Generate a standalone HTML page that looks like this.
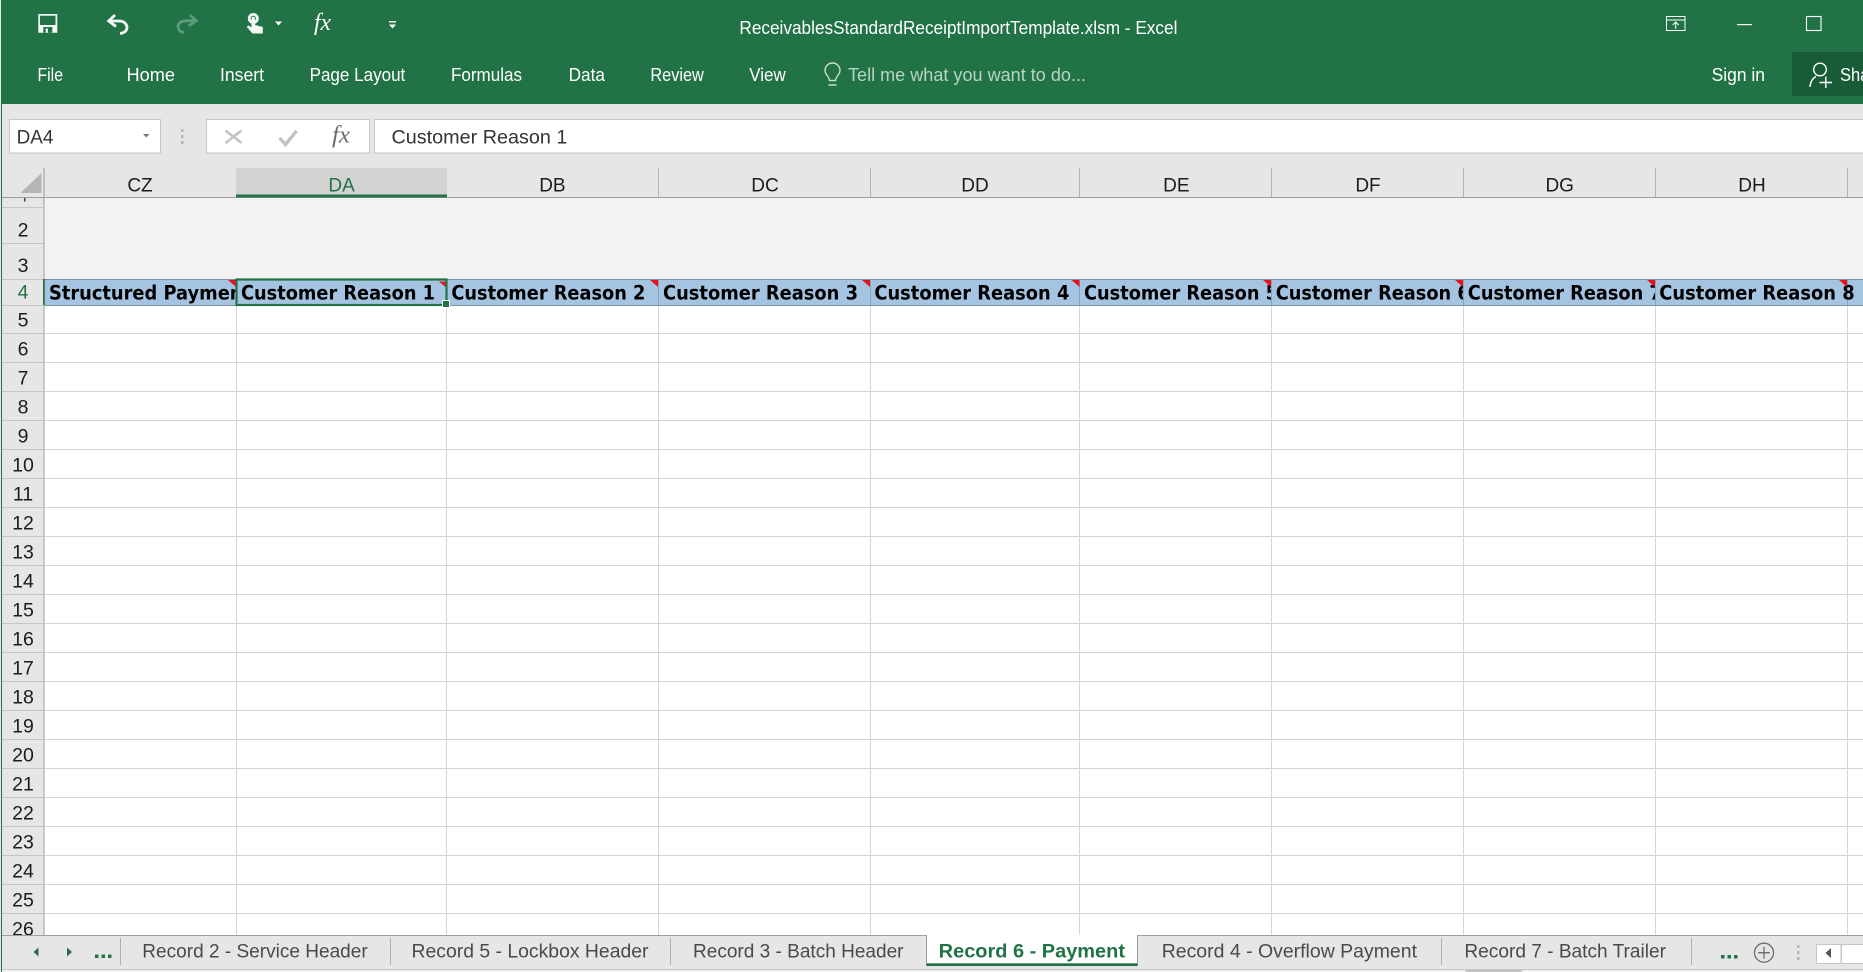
<!DOCTYPE html>
<html lang="en"><head><meta charset="utf-8"><title>ReceivablesStandardReceiptImportTemplate.xlsm - Excel</title>
<style>
html,body{margin:0;padding:0;width:1863px;height:972px;overflow:hidden;background:#e6e6e6}
svg{display:block}
text{font-family:"Liberation Sans",sans-serif}
.w{fill:#fff;font-size:18.5px}
.c{fill:#1c1c1c;font-size:19px;text-anchor:middle}
.r{fill:#1c1c1c;font-size:19.5px;text-anchor:middle}
.b{fill:#000;font-family:"DejaVu Sans",sans-serif;font-weight:700;font-size:19.5px}
.t{fill:#4a4a4a;font-size:19.5px}
</style></head><body>
<svg width="1863" height="972" viewBox="0 0 1863 972" xmlns="http://www.w3.org/2000/svg">
<defs>
<clipPath id="c0"><rect x="44" y="280" width="191.5" height="25"/></clipPath>
<clipPath id="c5"><rect x="1079" y="280" width="192" height="25"/></clipPath>
<clipPath id="c6"><rect x="1271" y="280" width="192" height="25"/></clipPath>
<clipPath id="c7"><rect x="1463" y="280" width="192" height="25"/></clipPath>
</defs>
<!-- page bg -->
<rect width="1863" height="972" fill="#e6e6e6"/>
<!-- title/ribbon -->
<rect x="0" y="0" width="1863" height="104" fill="#217346"/>
<rect x="1792" y="52" width="71" height="44" fill="#185c37"/>
<!-- QAT: save -->
<path d="M38.300 14H57.300V32.700H38.300Z" fill="#f4f8f5"/>
<rect x="40" y="15.700" width="15.500" height="9.300" fill="#217346"/>
<rect x="43.300" y="27" width="9" height="5.700" fill="#217346"/>
<rect x="45.700" y="28.500" width="2.200" height="4.200" fill="#f4f8f5"/>
<!-- undo -->
<path d="M115 15L108.700 21L116 26.500M109 21H119C124.500 21 127 24.500 127 27.500C127 31 124 33 120 33.500" fill="none" stroke="#f4f8f5" stroke-width="2.800"/>
<!-- redo -->
<path d="M190 15L196.300 20.800L188.500 26M196 20.800H185.500C180.500 20.800 178 24 178 26.800C178 30 180.500 32 184 32.500" fill="none" stroke="#5c9c7b" stroke-width="2.800"/>
<!-- touch -->
<circle cx="253.300" cy="18.500" r="5.500" fill="#f4f8f5"/>
<circle cx="253.300" cy="18.500" r="2.700" fill="#217346"/>
<path d="M251.500 18.500a1.800 1.800 0 0 1 3.600 0V25l7.700 2V33.500H252.500L246.800 27l1.500-1.500 3.200 1.700Z" fill="#f4f8f5"/>
<path d="M275 21.500h7l-3.500 4z" fill="#fff"/>
<text x="314" y="30" style="font-family:'Liberation Serif',serif;font-style:italic;font-size:24px" fill="#fff" textLength="17" lengthAdjust="spacingAndGlyphs">fx</text>
<rect x="389" y="21" width="7" height="1.500" fill="#fff"/><path d="M389 24.500h7l-3.500 4z" fill="#fff"/>
<!-- title -->
<text class="w" x="739.400" y="34" textLength="438" lengthAdjust="spacingAndGlyphs">ReceivablesStandardReceiptImportTemplate.xlsm - Excel</text>
<!-- ribbon tabs -->
<text class="w" x="37.500" y="81" textLength="25.500" lengthAdjust="spacingAndGlyphs">File</text>
<text class="w" x="126.500" y="81" textLength="48.500" lengthAdjust="spacingAndGlyphs">Home</text>
<text class="w" x="220" y="81" textLength="44" lengthAdjust="spacingAndGlyphs">Insert</text>
<text class="w" x="309.600" y="81" textLength="95.700" lengthAdjust="spacingAndGlyphs">Page Layout</text>
<text class="w" x="451" y="81" textLength="71" lengthAdjust="spacingAndGlyphs">Formulas</text>
<text class="w" x="568.600" y="81" textLength="36.400" lengthAdjust="spacingAndGlyphs">Data</text>
<text class="w" x="650.400" y="81" textLength="53.400" lengthAdjust="spacingAndGlyphs">Review</text>
<text class="w" x="749.300" y="81" textLength="36.400" lengthAdjust="spacingAndGlyphs">View</text>
<path d="M829.500 80.500C829 76 825 74.500 825 70.500A7.500 7.500 0 0 1 840 70.500C840 74.500 836 76 835.500 80.500ZM828.500 85H836.500" fill="none" stroke="#c8dfd2" stroke-width="1.400"/>
<text x="848" y="81" font-size="18.500" fill="#b7d4c4" textLength="238" lengthAdjust="spacingAndGlyphs">Tell me what you want to do...</text>
<!-- window controls -->
<path d="M1666.500 16.500H1685V30.500H1666.500ZM1666.500 20H1685M1675.700 29V22M1672.700 25L1675.700 22L1678.700 25" fill="none" stroke="#fff" stroke-width="1"/>
<rect x="1737" y="24" width="15" height="1.200" fill="#fff"/>
<rect x="1806.500" y="16.500" width="14.500" height="14" fill="none" stroke="#fff" stroke-width="1.100"/>
<text class="w" x="1711.600" y="81" textLength="53.400" lengthAdjust="spacingAndGlyphs">Sign in</text>
<circle cx="1820" cy="69.500" r="6.300" fill="none" stroke="#fff" stroke-width="1.400"/>
<path d="M1810 87C1810.500 81 1813 78 1816 76.500M1819.500 82.500H1832M1825.800 76.500V88" fill="none" stroke="#fff" stroke-width="1.400"/>
<text class="w" x="1840" y="81" textLength="44" lengthAdjust="spacingAndGlyphs">Share</text>
<!-- formula bar -->
<rect x="0" y="104" width="1863" height="64" fill="#e6e6e6"/>
<rect x="9.500" y="119.500" width="151" height="33.500" fill="#fff" stroke="#c6c6c6"/>
<text x="16.600" y="143.500" font-size="19.500" fill="#333" textLength="36.800" lengthAdjust="spacingAndGlyphs">DA4</text>
<path d="M143 134h6.500l-3.250 3.500z" fill="#777"/>
<rect x="181" y="129" width="2.500" height="3" fill="#b5b5b5"/><rect x="181" y="135" width="2.500" height="3" fill="#b5b5b5"/><rect x="181" y="141" width="2.500" height="3" fill="#b5b5b5"/>
<rect x="206.500" y="119.500" width="163" height="33.500" fill="#fff" stroke="#c6c6c6"/>
<path d="M225.500 130.500L241.500 143M241.500 130.500L225.500 143" stroke="#c2c2c2" stroke-width="2.400" fill="none"/>
<path d="M279.500 138L285.500 144.500L296.500 131" stroke="#c2c2c2" stroke-width="3.400" fill="none"/>
<text x="332" y="142.500" style="font-family:'Liberation Serif',serif;font-style:italic;font-size:24px" fill="#6a6a6a" textLength="18" lengthAdjust="spacingAndGlyphs">fx</text>
<rect x="374.500" y="119.500" width="1490" height="33.500" fill="#fff" stroke="#c6c6c6"/>
<text x="391.500" y="143.500" font-size="19.500" fill="#333" textLength="175.900" lengthAdjust="spacingAndGlyphs">Customer Reason 1</text>
<!-- sheet -->
<rect x="44" y="197" width="1819" height="738" fill="#fff"/>
<rect x="44" y="197" width="1819" height="82" fill="#f2f2f2"/>
<!-- grid -->
<path d="M44 333.500H1863M44 362.500H1863M44 391.500H1863M44 420.500H1863M44 449.500H1863M44 478.500H1863M44 507.500H1863M44 536.500H1863M44 565.500H1863M44 594.500H1863M44 623.500H1863M44 652.500H1863M44 681.500H1863M44 710.500H1863M44 739.500H1863M44 768.500H1863M44 797.500H1863M44 826.500H1863M44 855.500H1863M44 884.500H1863M44 913.500H1863" stroke="#d4d4d4" stroke-width="1" fill="none"/>
<path d="M236.500 305V935M446.500 305V935M658.500 305V935M870.500 305V935M1079.500 305V935M1271.500 305V935M1463.500 305V935M1655.500 305V935M1847.500 305V935" stroke="#d4d4d4" stroke-width="1" fill="none"/>
<!-- row 4 -->
<rect x="44" y="279" width="1819" height="26" fill="#a5c4e2"/>
<path d="M44 279.500H1863M44 305.500H1863" stroke="#7e90a5" stroke-width="1" fill="none"/>
<path d="M236.500 279V305M446.500 279V305M658.500 279V305M870.500 279V305M1079.500 279V305M1271.500 279V305M1463.500 279V305M1655.500 279V305M1847.500 279V305" stroke="#8ba2bb" stroke-width="1" fill="none"/>
<text class="b" x="49" y="299.300" textLength="202" lengthAdjust="spacingAndGlyphs" clip-path="url(#c0)">Structured Payment</text>
<text class="b" x="241" y="299.300" textLength="194" lengthAdjust="spacingAndGlyphs">Customer Reason 1</text>
<text class="b" x="451.400" y="299.300" textLength="194" lengthAdjust="spacingAndGlyphs">Customer Reason 2</text>
<text class="b" x="663" y="299.300" textLength="195" lengthAdjust="spacingAndGlyphs">Customer Reason 3</text>
<text class="b" x="874.400" y="299.300" textLength="195" lengthAdjust="spacingAndGlyphs">Customer Reason 4</text>
<text class="b" x="1084" y="299.300" textLength="194" lengthAdjust="spacingAndGlyphs" clip-path="url(#c5)">Customer Reason 5</text>
<text class="b" x="1275.700" y="299.300" textLength="194" lengthAdjust="spacingAndGlyphs" clip-path="url(#c6)">Customer Reason 6</text>
<text class="b" x="1467.800" y="299.300" textLength="194" lengthAdjust="spacingAndGlyphs" clip-path="url(#c7)">Customer Reason 7</text>
<text class="b" x="1659.300" y="299.300" textLength="195.400" lengthAdjust="spacingAndGlyphs">Customer Reason 8</text>
<!-- comment triangles -->
<path d="M228 280H236V287ZM439 281.500H445.500V287ZM650 280H658V287ZM862 280H870V287ZM1071.500 280H1079.500V287ZM1263 280H1271V287ZM1455 280H1463V287ZM1647 280H1655V287ZM1839 280H1847V287Z" fill="#e8111b"/>
<!-- col header -->
<rect x="44" y="168" width="1819" height="29" fill="#e6e6e6"/>
<rect x="236" y="168" width="211" height="29" fill="#d2d2d2"/>
<path d="M658.500 168V197M870.500 168V197M1079.500 168V197M1271.500 168V197M1463.500 168V197M1655.500 168V197M1847.500 168V197" stroke="#b5b5b5" stroke-width="1" fill="none"/>
<rect x="0" y="197" width="1863" height="1" fill="#9f9f9f"/>
<rect x="236" y="194.500" width="211" height="3" fill="#217346"/>
<text class="c" x="140" y="191.600">CZ</text>
<text class="c" x="341.600" y="191.600" style="fill:#217346">DA</text>
<text class="c" x="552.400" y="191.600">DB</text>
<text class="c" x="765" y="191.600">DC</text>
<text class="c" x="975" y="191.600">DD</text>
<text class="c" x="1176.300" y="191.600">DE</text>
<text class="c" x="1368" y="191.600">DF</text>
<text class="c" x="1559.700" y="191.600">DG</text>
<text class="c" x="1752" y="191.600">DH</text>
<!-- row header -->
<rect x="0" y="168" width="44" height="767" fill="#e6e6e6"/>
<path d="M41.500 173V193H20.500Z" fill="#b5b5b5"/>
<rect x="0" y="197" width="44" height="1" fill="#9f9f9f"/>
<rect x="43.500" y="168" width="1" height="767" fill="#9f9f9f"/>
<path d="M0 207.500H44M0 243.500H44M0 279.500H44M0 305.500H44M0 333.500H44M0 362.500H44M0 391.500H44M0 420.500H44M0 449.500H44M0 478.500H44M0 507.500H44M0 536.500H44M0 565.500H44M0 594.500H44M0 623.500H44M0 652.500H44M0 681.500H44M0 710.500H44M0 739.500H44M0 768.500H44M0 797.500H44M0 826.500H44M0 855.500H44M0 884.500H44M0 913.500H44" stroke="#c6c6c6" stroke-width="1" fill="none"/>
<rect x="24" y="198" width="1.500" height="3.500" fill="#444"/>
<rect x="43" y="279" width="1.800" height="26" fill="#217346"/>
<text class="r" x="23" y="236.700">2</text>
<text class="r" x="23" y="272">3</text>
<text class="r" x="23" y="298.700" style="fill:#217346">4</text>
<text class="r" x="23" y="326.700">5</text>
<text class="r" x="23" y="355.700">6</text>
<text class="r" x="23" y="384.700">7</text>
<text class="r" x="23" y="413.700">8</text>
<text class="r" x="23" y="442.700">9</text>
<text class="r" x="23" y="471.700">10</text>
<text class="r" x="23" y="500.700">11</text>
<text class="r" x="23" y="529.700">12</text>
<text class="r" x="23" y="558.700">13</text>
<text class="r" x="23" y="587.700">14</text>
<text class="r" x="23" y="616.700">15</text>
<text class="r" x="23" y="645.700">16</text>
<text class="r" x="23" y="674.700">17</text>
<text class="r" x="23" y="703.700">18</text>
<text class="r" x="23" y="732.700">19</text>
<text class="r" x="23" y="761.700">20</text>
<text class="r" x="23" y="790.700">21</text>
<text class="r" x="23" y="819.700">22</text>
<text class="r" x="23" y="848.700">23</text>
<text class="r" x="23" y="877.700">24</text>
<text class="r" x="23" y="906.700">25</text>
<text class="r" x="23" y="935.700">26</text>
<!-- selection -->
<rect x="236.500" y="279.500" width="210" height="25.500" fill="none" stroke="#217346" stroke-width="2.200"/>
<rect x="442.500" y="300.500" width="7" height="7" fill="#217346" stroke="#fff" stroke-width="1"/>
<!-- tab bar -->
<rect x="0" y="935" width="1863" height="34" fill="#e6e6e6"/>
<rect x="0" y="935" width="1863" height="1" fill="#9f9f9f"/>
<rect x="0" y="969" width="1863" height="1" fill="#c6c6c6"/>
<rect x="0" y="970" width="1863" height="2" fill="#f0f0f0"/>
<rect x="1465.600" y="969" width="56.200" height="3" fill="#c4c4c4"/>
<path d="M38.500 947.500V956.500L33.500 952ZM67 947.500V956.500L72 952Z" fill="#217346"/>
<path d="M95 954.500h3.500v3.500h-3.500zM101.500 954.500h3.500v3.500h-3.500zM108 954.500h3.500v3.500h-3.500zM1721 955h3.500v3.500h-3.500zM1727.500 955h3.500v3.500h-3.500zM1734 955h3.500v3.500h-3.500z" fill="#217346"/>
<path d="M120.500 938V965M390.500 938V965M670.500 938V965M1441.500 938V965M1691.500 938V965" stroke="#b0b0b0" stroke-width="1" fill="none"/>
<rect x="926.500" y="935" width="211" height="31" fill="#fff"/>
<path d="M926.500 935V966M1137.500 935V966" stroke="#9f9f9f" stroke-width="1" fill="none"/>
<rect x="926.500" y="963.300" width="211" height="2.700" fill="#217346"/>
<text class="t" x="142.300" y="957.300" textLength="225.400" lengthAdjust="spacingAndGlyphs">Record 2 - Service Header</text>
<text class="t" x="411.500" y="957.300" textLength="237" lengthAdjust="spacingAndGlyphs">Record 5 - Lockbox Header</text>
<text class="t" x="693" y="957.300" textLength="210.500" lengthAdjust="spacingAndGlyphs">Record 3 - Batch Header</text>
<text x="938.700" y="957.300" font-size="19.500" font-weight="700" fill="#217346" textLength="186.300" lengthAdjust="spacingAndGlyphs">Record 6 - Payment</text>
<text class="t" x="1161.700" y="957.300" textLength="255.300" lengthAdjust="spacingAndGlyphs">Record 4 - Overflow Payment</text>
<text class="t" x="1464.400" y="957.300" textLength="201.600" lengthAdjust="spacingAndGlyphs">Record 7 - Batch Trailer</text>
<circle cx="1764" cy="952.700" r="9.500" fill="none" stroke="#6e6e6e" stroke-width="1.300"/>
<path d="M1758 952.700H1770M1764 946.700V958.700" stroke="#6e6e6e" stroke-width="1.300" fill="none"/>
<rect x="1797" y="945" width="2.500" height="3" fill="#b5b5b5"/><rect x="1797" y="951" width="2.500" height="3" fill="#b5b5b5"/><rect x="1797" y="957" width="2.500" height="3" fill="#b5b5b5"/>
<rect x="1816.500" y="944.500" width="24.500" height="19" fill="#fff" stroke="#c6c6c6"/>
<rect x="1841.500" y="944.500" width="30" height="19" fill="#fff" stroke="#c6c6c6"/>
<path d="M1831 948V958L1825.500 953Z" fill="#555"/>
<!-- left edge -->
<rect x="0" y="0" width="1" height="972" fill="#e8e8e8"/>
<rect x="1" y="0" width="1" height="972" fill="#217346"/>
</svg>
</body></html>
